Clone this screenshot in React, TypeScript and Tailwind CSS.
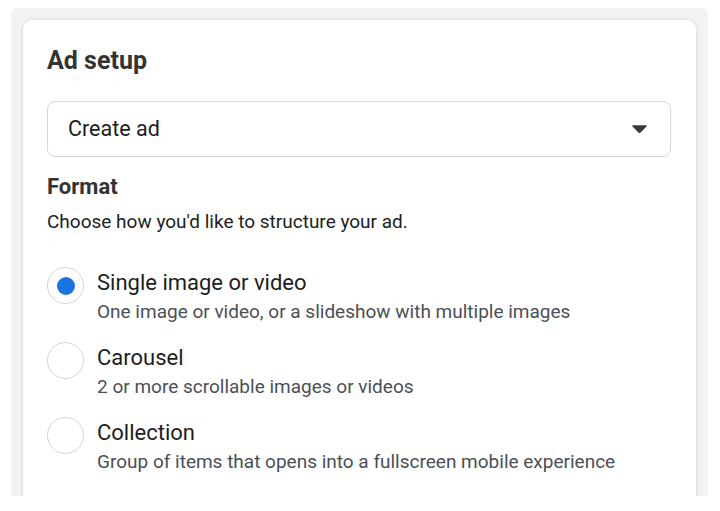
import { useState } from 'react'

// ─── Data ─────────────────────────────────────────────────────────────────────

type FormatOption = {
  id: string
  title: string
  description: string
}

const formats: FormatOption[] = [
  { id: 'single', title: 'Single image or video', description: 'One image or video, or a slideshow with multiple images' },
  { id: 'carousel', title: 'Carousel', description: '2 or more scrollable images or videos' },
  { id: 'collection', title: 'Collection', description: 'Group of items that opens into a fullscreen mobile experience' },
]

// ─── Radio ────────────────────────────────────────────────────────────────────

function Radio({ checked }: { checked: boolean }) {
  return (
    <span className="flex h-[37px] w-[37px] shrink-0 items-center justify-center rounded-full border-[1.5px] border-[#d4d4d4] bg-white">
      {checked && <span className="h-[18px] w-[18px] rounded-full bg-[#1b74e4]" />}
    </span>
  )
}

// ─── Main ─────────────────────────────────────────────────────────────────────

export default function App() {
  const [selected, setSelected] = useState('single')

  return (
    <div className="h-[511px] w-[720px] bg-white pl-[11px] pt-[8px] font-['Roboto',sans-serif]">
      <div className="h-[488px] w-[697px] overflow-hidden rounded-t-[6px] bg-[#f2f2f2] px-[11px] pt-[11px]">
        <div className="h-[520px] rounded-[10px] border border-[#e3e3e3] bg-white pl-[24px] pr-[25px] pt-[26px] shadow-[0_1px_3px_rgba(0,0,0,0.08)]">
          <h1 className="text-[25px] font-bold leading-[30px] text-[#333]">Ad setup</h1>

          {/* Dropdown */}
          <button className="mt-[25px] flex h-[56px] w-full items-center justify-between rounded-[8px] border-[1.5px] border-[#d6d6d6] pl-[20px] pr-[23px] text-left">
            <span className="text-[21.5px] leading-[26px] text-[#1c1e21]">Create ad</span>
            <svg width="15" height="8" viewBox="0 0 15 8">
              <path d="M1 1h13l-6.5 6.5z" fill="#3a3a3a" stroke="#3a3a3a" strokeWidth="1.5" strokeLinejoin="round" />
            </svg>
          </button>

          <h2 className="mt-[17px] text-[22px] font-bold leading-[26px] text-[#333]">Format</h2>
          <p className="mt-[11px] text-[19px] leading-[22px] text-[#1c1e21]">Choose how you'd like to structure your ad.</p>

          <div className="mt-[34px] flex flex-col">
            {formats.map((f) => (
              <label key={f.id} className="flex h-[75px] cursor-pointer items-start gap-[13px]" onClick={() => setSelected(f.id)}>
                <Radio checked={selected === f.id} />
                <div className="mt-[3px]">
                  <p className="text-[22px] leading-[26px] text-[#1c1e21]">{f.title}</p>
                  <p className="mt-[4px] text-[19px] leading-[23px] text-[#4b4f56]">{f.description}</p>
                </div>
              </label>
            ))}
          </div>
        </div>
      </div>
    </div>
  )
}
